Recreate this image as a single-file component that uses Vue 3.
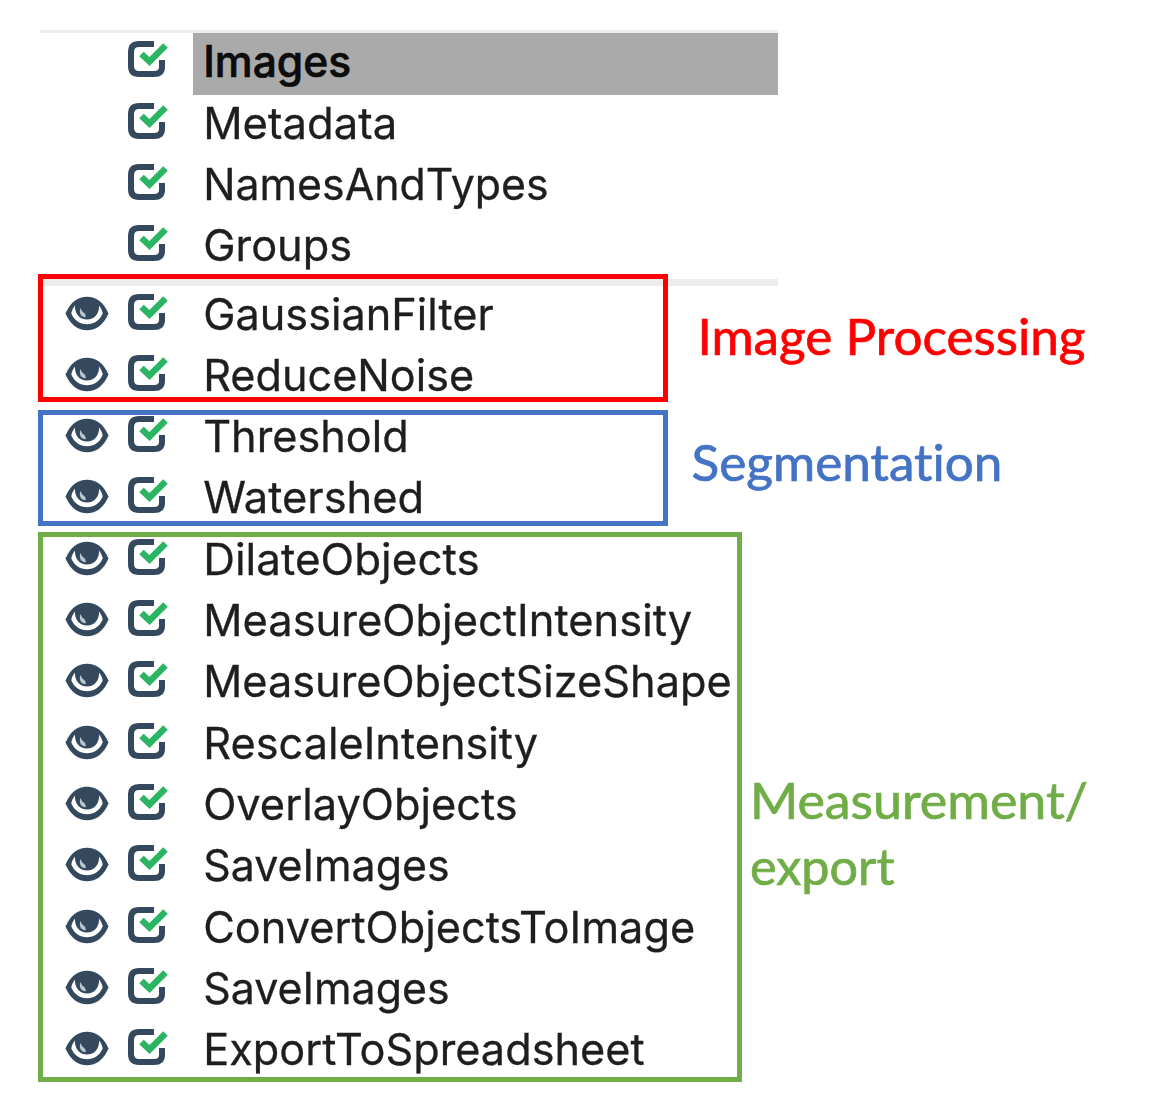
<script setup>
const inputModules = [
  { name: 'Images', width: 148, selected: true },
  { name: 'Metadata', width: 194 },
  { name: 'NamesAndTypes', width: 345.5 },
  { name: 'Groups', width: 149 },
]

const pipelineModules = [
  { name: 'GaussianFilter', width: 290.5 },
  { name: 'ReduceNoise', width: 271 },
  { name: 'Threshold', width: 205.5 },
  { name: 'Watershed', width: 221 },
  { name: 'DilateObjects', width: 276.5 },
  { name: 'MeasureObjectIntensity', width: 489 },
  { name: 'MeasureObjectSizeShape', width: 528.5 },
  { name: 'RescaleIntensity', width: 335 },
  { name: 'OverlayObjects', width: 314.5 },
  { name: 'SaveImages', width: 246.5 },
  { name: 'ConvertObjectsToImage', width: 492 },
  { name: 'SaveImages', width: 246.5 },
  { name: 'ExportToSpreadsheet', width: 441.5 },
]

const sections = [
  { id: 'input', modules: inputModules, eyes: false },
  { id: 'pipeline', modules: pipelineModules, eyes: true },
]

const callouts = [
  { id: 'processing', lines: [{ text: 'Image Processing', x: 0.5, y: 50, width: 388 }] },
  { id: 'segmentation', lines: [{ text: 'Segmentation', x: 0.5, y: 50, width: 311 }] },
  {
    id: 'measurement',
    lines: [
      { text: 'Measurement/', x: 0, y: 50, width: 338 },
      { text: 'export', x: 0, y: 116, width: 144.5 },
    ],
  },
]
</script>

<template>
  <main class="figure">
    <div class="panel">
      <section v-for="section in sections" :key="section.id" class="section">
        <div v-for="(mod, i) in section.modules" :key="i" class="row">
          <span class="eye-cell">
            <svg v-if="section.eyes" class="eye" viewBox="0 0 44 35">
              <path class="navy" d="M22 .8C31 .8 38.500 6 43.500 17.500C38.500 29 31 34.200 22 34.200S5.500 29 .5 17.500C5.500 6 13 .8 22 .8Z" />
              <path class="white" d="M10 9.500C8 12 6.800 14.500 6.300 17.500C9.500 24.500 15 28.300 22 28.300S34.500 24.500 37.700 17.500C37.200 14.500 36 12 34 9.500C34.500 17.500 29.500 23.500 22 23.500S9.500 17.500 10 9.500Z" />
              <path class="glint" d="M15.500 12C13.800 16.500 15.500 21 20.500 21.300C21.500 19 19.500 17 18 16C16.500 15.300 16.500 13.500 15.500 12Z" />
            </svg>
          </span>
          <span class="check-cell">
            <svg class="check" viewBox="0 0 42 40">
              <path class="frame" d="M27 5H12Q4 5 4 13V27Q4 35 12 35H27Q35 35 35 28V21" />
              <path class="tick" d="M14.500 15L22.500 22.500L38.500 6.500" />
            </svg>
          </span>
          <span class="name-cell" :class="{ selected: mod.selected }">
            <svg class="name" width="570" height="61">
              <text x="10.200" y="44.300" :textLength="mod.width" lengthAdjust="spacingAndGlyphs">{{ mod.name }}</text>
            </svg>
          </span>
        </div>
      </section>
    </div>

    <div class="outline red"></div>
    <div class="outline blue"></div>
    <div class="outline green"></div>

    <svg v-for="c in callouts" :key="c.id" class="callout" :class="c.id" width="400" height="140">
      <text
        v-for="line in c.lines"
        :key="line.text"
        :x="line.x"
        :y="line.y"
        :textLength="line.width"
        lengthAdjust="spacingAndGlyphs"
      >{{ line.text }}</text>
    </svg>
  </main>
</template>

<style>
body {
  margin: 0;
  background: #fff;
}
</style>

<style scoped>
.figure {
  position: relative;
  box-sizing: border-box;
  width: 1164px;
  height: 1109px;
  padding: 30.400px 0 0 40px;
  overflow: hidden;
  background: #fff;
}
.panel {
  width: 738px;
  filter: blur(0.7px);
}
.section {
  border-top: 3px solid #ededed;
}
.section + .section {
  border-top: 7px solid #ececec;
}
.row {
  display: flex;
  height: 61.300px;
}
.eye-cell {
  width: 87px;
  padding: 10px 0 0 25px;
  box-sizing: border-box;
}
.check-cell {
  width: 66px;
  padding-top: 6px;
}
.name-cell {
  flex: 1;
  overflow: hidden;
}
.name-cell.selected {
  background: #aaa;
}
.eye,
.check,
.name {
  display: block;
}
.eye {
  width: 44px;
  height: 35px;
}
.check {
  width: 42px;
  height: 40px;
}
.navy {
  fill: #34495e;
}
.white {
  fill: #fff;
}
.glint {
  fill: #bcc5ce;
}
.frame {
  fill: none;
  stroke: #34495e;
  stroke-width: 6;
}
.tick {
  fill: none;
  stroke: #2bb563;
  stroke-width: 6.500;
}
.name text {
  font-family: Inter, "Liberation Sans", sans-serif;
  font-size: 43.500px;
  fill: #1e1e1e;
  stroke: #1e1e1e;
  stroke-width: 0.3px;
}
.selected .name text {
  font-weight: 500;
  fill: #0c0c0c;
  stroke: #0c0c0c;
  stroke-width: 0.7px;
}
.outline {
  position: absolute;
  box-sizing: border-box;
  left: 38px;
  width: 630px;
  border: 5px solid;
}
.outline.red {
  top: 274px;
  height: 128px;
  border-color: #f00;
}
.outline.blue {
  top: 410px;
  height: 116px;
  border-color: #4472c4;
}
.outline.green {
  top: 532px;
  width: 704px;
  height: 550px;
  border-color: #70ad47;
}
.callout {
  position: absolute;
  overflow: visible;
}
.callout text {
  font-family: Lato, "Liberation Sans", sans-serif;
  font-size: 49.500px;
  font-variant-ligatures: none;
  stroke-width: 0.7px;
}
.processing {
  left: 697px;
  top: 305px;
  fill: #f00;
  stroke: #f00;
}
.segmentation {
  left: 691px;
  top: 431px;
  fill: #4472c4;
  stroke: #4472c4;
}
.measurement {
  left: 750px;
  top: 769px;
  fill: #70ad47;
  stroke: #70ad47;
}
</style>
